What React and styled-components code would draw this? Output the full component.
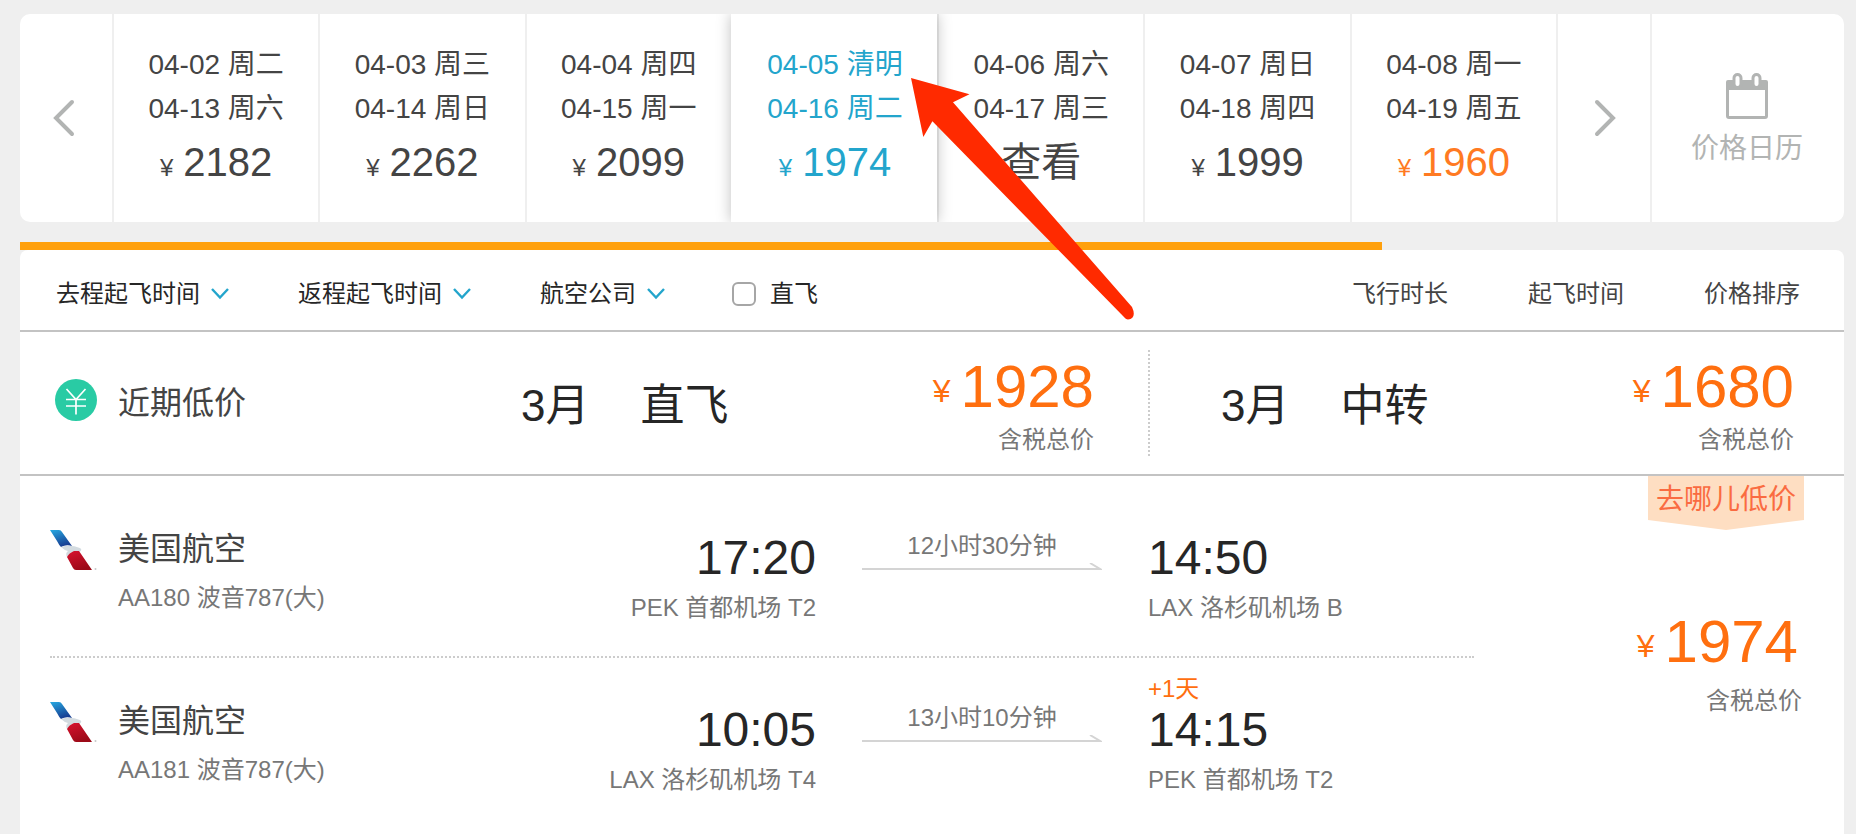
import React from "react";
import styled, { createGlobalStyle } from "styled-components";

const GlobalStyle = createGlobalStyle`
  * {
    box-sizing: border-box;
  }

  body {
    margin: 0;
    background: #efefef;
    color: #444;
    font-family: "Liberation Sans", "Noto Sans CJK SC", sans-serif;
  }

  button {
    margin: 0;
    padding: 0;
    border: 0;
    background: none;
    color: inherit;
    font: inherit;
    cursor: pointer;
  }
`;

const Page = styled.div`
  position: relative;
  display: flex;
  flex-direction: column;
  min-height: 100vh;
  padding: 14px 12px 0 20px;
`;

const DateStrip = styled.nav`
  display: grid;
  grid-template-columns: 92px repeat(7, 1fr) 94px 194px;
  overflow: hidden;
  border-radius: 10px;
  background: #fff;
`;

const StripButton = styled.button`
  display: flex;
  flex-direction: column;
  align-items: center;
  justify-content: center;
  padding-right: 4px;
  color: #b2b4b3;
  font-size: 28px;
  line-height: 40px;
`;

const NextButton = styled(StripButton)`
  padding: 0 0 0 2px;
  border-left: 2px solid #efefef;
`;

const CalendarButton = styled(StripButton)`
  gap: 10px;
  padding: 6px 2px 0 0;
  border-left: 2px solid #efefef;
`;

const DateButton = styled.button`
  position: relative;
  z-index: ${({ $active }) => ($active ? 1 : 0)};
  padding: 29px 0;
  border-left: 2px solid ${({ $active }) => ($active ? "#fff" : "#efefef")};
  background: #fff;
  box-shadow: ${({ $active }) =>
    $active ? "0 0 14px rgba(0, 0, 0, 0.25)" : "none"};
  color: ${({ $active }) => ($active ? "#23a5cc" : "#444")};
  font-size: 28px;
  line-height: 44px;
  text-align: center;
`;

const DateLine = styled.span`
  display: block;
`;

const DatePrice = styled.span`
  display: block;
  color: ${({ $low }) => ($low ? "#ff7a22" : "inherit")};
  font-size: 40px;
  line-height: 62px;

  small {
    margin-right: 10px;
    font-size: 24px;
    line-height: 24px;
  }
`;

const Progress = styled.div`
  height: 8px;
  margin-top: 20px;

  div {
    height: 100%;
    background: #ffa00c;
  }
`;

const Results = styled.main`
  flex: 1;
  border-radius: 8px 8px 0 0;
  background: #fff;
`;

const FilterBar = styled.div`
  display: flex;
  align-items: center;
  justify-content: space-between;
  height: 82px;
  padding: 8px 44px 0 36px;
  border-bottom: 2px solid #c3c3c3;
  font-size: 24px;
  line-height: 32px;
`;

const Filters = styled.div`
  display: flex;
  align-items: center;
  gap: 69px;
  color: #262626;
`;

const FilterButton = styled.button`
  display: flex;
  align-items: center;
  gap: 11px;
`;

const CheckLabel = styled.label`
  display: flex;
  align-items: center;
  gap: 14px;
  margin-left: -2px;
  cursor: pointer;
`;

const Checkbox = styled.input`
  appearance: none;
  width: 24px;
  height: 24px;
  margin: 0;
  border: 2px solid #a6a6a6;
  border-radius: 6px;
  background: #fff;

  &:checked {
    background: #23a5cc;
  }
`;

const Sorts = styled.div`
  display: flex;
  gap: 80px;
`;

const RecentRow = styled.section`
  display: grid;
  grid-template-columns: 428fr 700fr 696fr;
  align-items: center;
  height: 144px;
  border-bottom: 2px solid #c3c3c3;
`;

const RecentTitle = styled.h2`
  display: flex;
  align-items: center;
  gap: 21px;
  margin: 0;
  padding-left: 35px;
  font-size: 32px;
  font-weight: 400;
  line-height: 40px;

  svg {
    margin-bottom: 6px;
  }
`;

const RecentOption = styled.div`
  display: flex;
  align-items: center;
  justify-content: space-between;
  height: 106px;
  padding: 0 54px 0 73px;

  & + & {
    padding: 0 50px 0 71px;
    border-left: 2px dotted #ccc;
  }
`;

const RecentName = styled.div`
  display: flex;
  gap: 51px;
  padding-top: 6px;
  color: #262626;
  font-size: 44px;
  line-height: 56px;
`;

const PriceBlock = styled.div`
  padding-top: 10px;
  text-align: right;
`;

const Amount = styled.div`
  color: #ff6f0f;
  font-size: 60px;
  line-height: 64px;
  white-space: nowrap;

  small {
    margin-right: 10px;
    font-size: 32px;
    line-height: 32px;
    vertical-align: 5px;
  }
`;

const TaxNote = styled.div`
  color: #777;
  font-size: 24px;
  line-height: 42px;
`;

const Flight = styled.article`
  display: grid;
  grid-template-columns: 1424fr 370fr;
  padding-left: 30px;
`;

const Segments = styled.div`
  padding-top: 10px;
`;

const SegmentRow = styled.div`
  display: grid;
  grid-template-columns: 360fr 360fr 240px 326fr;
  align-items: start;
  gap: 46px;
  min-height: 172px;
  padding-top: 43px;
  color: #777;
  font-size: 24px;
  line-height: 42px;
  white-space: nowrap;

  &:not(:last-child) {
    border-bottom: 2px dotted #ccc;
  }
`;

const Carrier = styled.div`
  display: flex;
  gap: 20px;
`;

const CarrierName = styled.div`
  margin-bottom: 8px;
  color: #444;
  font-size: 32px;
  line-height: 40px;
`;

const Stop = styled.div`
  position: relative;
  text-align: ${({ $align }) => $align || "left"};
`;

const Time = styled.div`
  color: #262626;
  font-size: 48px;
  line-height: 58px;
`;

const DayShift = styled.span`
  position: absolute;
  bottom: 100%;
  left: 0;
  color: #ff6f0f;
  line-height: 24px;
`;

const Duration = styled.div`
  line-height: 34px;
  text-align: center;

  svg {
    display: block;
  }
`;

const FlightPrice = styled.div`
  position: relative;
  display: flex;
  flex-direction: column;
  justify-content: center;
  padding: 26px 42px 0 0;
  text-align: right;

  ${Amount} {
    margin: 0 4px 6px 0;
  }
`;

const LowBadge = styled.span`
  position: absolute;
  top: 0;
  right: 40px;
  padding: 4px 8px 10px;
  background: #fedec2;
  clip-path: polygon(0 0, 100% 0, 100% 44px, 50% 100%, 0 44px);
  color: #fa6b41;
  font-size: 28px;
  line-height: 40px;
`;

const Pointer = styled.svg`
  position: absolute;
  z-index: 2;
  top: 78px;
  left: 911px;
  pointer-events: none;
`;

const dates = [
  { out: "04-02 周二", back: "04-13 周六", price: 2182 },
  { out: "04-03 周三", back: "04-14 周日", price: 2262 },
  { out: "04-04 周四", back: "04-15 周一", price: 2099 },
  { out: "04-05 清明", back: "04-16 周二", price: 1974, active: true },
  { out: "04-06 周六", back: "04-17 周三" },
  { out: "04-07 周日", back: "04-18 周四", price: 1999 },
  { out: "04-08 周一", back: "04-19 周五", price: 1960, low: true },
];

const filters = ["去程起飞时间", "返程起飞时间", "航空公司"];
const sorts = ["飞行时长", "起飞时间", "价格排序"];

const recent = [
  { month: "3月", type: "直飞", price: 1928 },
  { month: "3月", type: "中转", price: 1680 },
];

const segments = [
  {
    id: 1,
    carrier: "美国航空",
    plane: "AA180 波音787(大)",
    depart: "17:20",
    from: "PEK 首都机场 T2",
    duration: "12小时30分钟",
    arrive: "14:50",
    to: "LAX 洛杉矶机场 B",
  },
  {
    id: 2,
    carrier: "美国航空",
    plane: "AA181 波音787(大)",
    depart: "10:05",
    from: "LAX 洛杉矶机场 T4",
    duration: "13小时10分钟",
    arrive: "14:15",
    to: "PEK 首都机场 T2",
    shift: "+1天",
  },
];

const Arrow = ({ next }) => (
  <svg width='24' height='40' viewBox='0 0 24 40' fill='none' aria-hidden='true'>
    <path
      d={next ? "M4 4L20 20L4 36" : "M20 4L4 20L20 36"}
      stroke='#b2b4b3'
      strokeWidth='4'
      strokeLinecap='round'
    />
  </svg>
);

const CalendarIcon = () => (
  <svg width='44' height='46' viewBox='0 0 44 46' aria-hidden='true'>
    <path
      fill='#b2b4b3'
      fillRule='evenodd'
      d='M3 7H41Q43 7 43 9V43Q43 46 40 46H4Q1 46 1 43V9Q1 7 3 7ZM4 17V43H40V17Z'
    />
    <rect x='9' y='1.5' width='7' height='13' rx='3.5' fill='#fff' stroke='#b2b4b3' strokeWidth='3' />
    <rect x='28' y='1.5' width='7' height='13' rx='3.5' fill='#fff' stroke='#b2b4b3' strokeWidth='3' />
  </svg>
);

const ChevronIcon = () => (
  <svg width='18' height='12' viewBox='0 0 18 12' fill='none' aria-hidden='true'>
    <path d='M1 1L9 9.5L17 1' stroke='#23a5cc' strokeWidth='2.4' />
  </svg>
);

const YenIcon = () => (
  <svg width='42' height='42' viewBox='0 0 42 42' fill='none' aria-hidden='true'>
    <circle cx='21' cy='21' r='21' fill='#29cba4' />
    <path
      d='M11.5 10L21 20.5L30.5 10M21 20.5V35.5M11 20.5H31M11 27H31'
      stroke='#fff'
      strokeWidth='1.7'
    />
  </svg>
);

const AirlineLogo = () => (
  <svg width='48' height='42' viewBox='0 0 48 42' aria-hidden='true'>
    <defs>
      <linearGradient id='tailBlue' x1='0' y1='0' x2='0.4' y2='1'>
        <stop offset='0' stopColor='#27a9e1' />
        <stop offset='1' stopColor='#173f93' />
      </linearGradient>
      <linearGradient id='tailRed' x1='0' y1='0' x2='0.5' y2='1'>
        <stop offset='0' stopColor='#d9132f' />
        <stop offset='1' stopColor='#9c0a18' />
      </linearGradient>
    </defs>
    <path d='M0 1H9Q11 1 12 3L22 17Q16 15 11 18Q9 16 7 12Z' fill='url(#tailBlue)' />
    <path d='M11 18Q20 15 30 19Q33 21 29 23L22 23L17 28Q15 24 18 22Q14 21 11 18Z' fill='#d3dbe0' />
    <path d='M17 28Q19 24 24 22H29L42 41H26Q24 41 23 39Z' fill='url(#tailRed)' />
    <circle cx='45.5' cy='40' r='1' fill='#c8c8c8' />
  </svg>
);

const Price = ({ value }) => (
  <>
    <Amount>
      <small>¥</small>
      {value}
    </Amount>
    <TaxNote>含税总价</TaxNote>
  </>
);

const DateItem = ({ out, back, price, active, low }) => (
  <DateButton type='button' $active={active} aria-pressed={!!active}>
    <DateLine>{out}</DateLine>
    <DateLine>{back}</DateLine>
    <DatePrice $low={low}>
      {price ? (
        <>
          <small>¥</small>
          {price}
        </>
      ) : (
        "查看"
      )}
    </DatePrice>
  </DateButton>
);

const Segment = ({ carrier, plane, depart, from, duration, arrive, to, shift }) => (
  <SegmentRow>
    <Carrier>
      <AirlineLogo />
      <div>
        <CarrierName>{carrier}</CarrierName>
        {plane}
      </div>
    </Carrier>
    <Stop $align='right'>
      <Time>{depart}</Time>
      {from}
    </Stop>
    <Duration>
      {duration}
      <svg width='240' height='8' viewBox='0 0 240 8' fill='none' aria-hidden='true'>
        <path d='M0 6H238L228 0' stroke='#d4d4d4' strokeWidth='2' />
      </svg>
    </Duration>
    <Stop>
      {shift && <DayShift>{shift}</DayShift>}
      <Time>{arrive}</Time>
      {to}
    </Stop>
  </SegmentRow>
);

const App = () => {
  return (
    <>
      <GlobalStyle />
      <Page>
        <DateStrip>
          <StripButton type='button' aria-label='前一天'>
            <Arrow />
          </StripButton>
          {dates.map((date) => (
            <DateItem key={date.out} {...date} />
          ))}
          <NextButton type='button' aria-label='后一天'>
            <Arrow next />
          </NextButton>
          <CalendarButton type='button'>
            <CalendarIcon />
            价格日历
          </CalendarButton>
        </DateStrip>

        <Progress>
          <div style={{ width: `${(1362 / 1824) * 100}%` }} />
        </Progress>

        <Results>
          <FilterBar>
            <Filters>
              {filters.map((name) => (
                <FilterButton type='button' aria-haspopup='listbox' key={name}>
                  {name}
                  <ChevronIcon />
                </FilterButton>
              ))}
              <CheckLabel htmlFor='direct'>
                <Checkbox type='checkbox' id='direct' />
                直飞
              </CheckLabel>
            </Filters>
            <Sorts>
              {sorts.map((name) => (
                <button type='button' key={name}>
                  {name}
                </button>
              ))}
            </Sorts>
          </FilterBar>

          <RecentRow>
            <RecentTitle>
              <YenIcon />
              近期低价
            </RecentTitle>
            {recent.map(({ month, type, price }) => (
              <RecentOption key={type}>
                <RecentName>
                  <span>{month}</span>
                  <span>{type}</span>
                </RecentName>
                <PriceBlock>
                  <Price value={price} />
                </PriceBlock>
              </RecentOption>
            ))}
          </RecentRow>

          <Flight>
            <Segments>
              {segments.map((segment) => (
                <Segment key={segment.id} {...segment} />
              ))}
            </Segments>
            <FlightPrice>
              <LowBadge>去哪儿低价</LowBadge>
              <Price value={1974} />
            </FlightPrice>
          </Flight>
        </Results>

        <Pointer width='224' height='243' viewBox='0 0 224 243' aria-hidden='true'>
          <path
            d='M0 0L58.5 16.3L42 24.3L221 229Q226 240 217 241.5Q215 241.5 212 238L21.4 43.3L12.3 59Z'
            fill='#ff2a00'
          />
        </Pointer>
      </Page>
    </>
  );
};

export default App;
